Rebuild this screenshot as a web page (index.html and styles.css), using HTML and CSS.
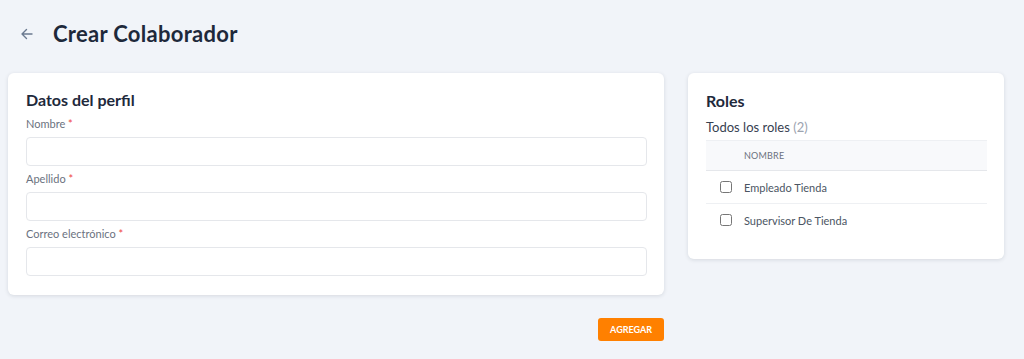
FILE: index.html
```html
<!doctype html>
<html lang="es">
<head>
  <meta charset="UTF-8">
  <meta name="viewport" content="width=device-width, initial-scale=1.0">
  <title>Crear Colaborador</title>
  <link rel="stylesheet" href="styles.css">
</head>
<body>
  <div class="page-header">
    <a href="#" class="back-link" aria-label="Volver">
      <svg width="14" height="14" viewBox="0 0 14 14" fill="none" stroke="currentColor" stroke-width="1.4" stroke-linecap="round" stroke-linejoin="round">
        <path d="M12 7H2M6.5 2.5L2 7l4.5 4.5"/>
      </svg>
    </a>
    <h1>Crear Colaborador</h1>
  </div>

  <div class="layout">
    <div class="main-col">
      <div class="card profile-card">
        <h2>Datos del perfil</h2>

        <div class="form-group">
          <label for="nombre">Nombre <span class="req">*</span></label>
          <input type="text" id="nombre" name="nombre">
        </div>

        <div class="form-group">
          <label for="apellido">Apellido <span class="req">*</span></label>
          <input type="text" id="apellido" name="apellido">
        </div>

        <div class="form-group">
          <label for="correo">Correo electrónico <span class="req">*</span></label>
          <input type="email" id="correo" name="correo">
        </div>
      </div>

      <div class="actions">
        <button type="submit" class="submit-btn">Agregar</button>
      </div>
    </div>

    <div class="card roles-card">
      <h2>Roles</h2>
      <div class="roles-count">Todos los roles <span class="muted">(2)</span></div>
      <table class="roles-table">
        <thead>
          <tr>
            <th class="check-col"></th>
            <th>Nombre</th>
          </tr>
        </thead>
        <tbody>
          <tr>
            <td class="check-col"><input type="checkbox"></td>
            <td>Empleado Tienda</td>
          </tr>
          <tr>
            <td class="check-col"><input type="checkbox"></td>
            <td>Supervisor De Tienda</td>
          </tr>
        </tbody>
      </table>
    </div>
  </div>
</body>
</html>
```

FILE: styles.css
```css
body {
  font-family: 'Lato', 'Open Sans', sans-serif;
  margin: 0;
  padding: 0;
  background: #f1f4f9;
  color: #1f2937;
}

.page-header {
  display: flex;
  align-items: center;
  height: 66px;
  padding: 0 20px;
}

.back-link {
  display: flex;
  color: #6b7a90;
  margin-right: 19px;
  margin-top: 2px;
}

h1 {
  margin: 0;
  font-size: 22px;
  font-weight: 700;
  color: #1e293b;
  letter-spacing: 0.3px;
}

.layout {
  display: flex;
  align-items: flex-start;
  gap: 24px;
  padding: 7px 20px 0 8px;
}

.main-col {
  width: 656px;
}

.card {
  background: #fff;
  border-radius: 6px;
  box-shadow: 0 1px 4px rgba(15, 23, 42, 0.12);
}

h2 {
  margin: 0;
  font-size: 16px;
  font-weight: 700;
  color: #1e293b;
}

.profile-card {
  padding: 17px 17px 19px 18px;
}

.profile-card h2 {
  margin-bottom: 8px;
}

.form-group {
  margin-bottom: 6px;
}

.form-group:last-child {
  margin-bottom: 0;
}

label {
  display: block;
  font-size: 11px;
  color: #6b7280;
  margin-bottom: 7px;
}

.req {
  color: #ef4444;
}

input[type="text"],
input[type="email"] {
  display: block;
  box-sizing: border-box;
  width: 100%;
  height: 29px;
  border: 1px solid #e5e7eb;
  border-radius: 4px;
  background: #fff;
  font-family: inherit;
}

.actions {
  display: flex;
  justify-content: flex-end;
  margin-top: 23px;
}

.submit-btn {
  background-color: #ff8000;
  color: #fff;
  border: none;
  height: 23px;
  padding: 0 12px;
  border-radius: 3px;
  font-family: inherit;
  font-size: 9px;
  font-weight: 700;
  text-transform: uppercase;
  cursor: pointer;
}

.roles-card {
  width: 316px;
  box-sizing: border-box;
  padding: 18px 17px 23px 18px;
}

.roles-count {
  font-size: 13px;
  color: #374151;
  margin: 9px 0 5px;
}

.muted {
  color: #9ca3af;
}

.roles-table {
  width: 100%;
  border-collapse: collapse;
  font-size: 11px;
  color: #4b5563;
}

.roles-table th {
  background: #f8f9fb;
  height: 29px;
  text-align: left;
  font-size: 9px;
  font-weight: 400;
  color: #6b7280;
  text-transform: uppercase;
  letter-spacing: 0.2px;
  border-top: 1px solid #eef0f3;
  border-bottom: 1px solid #e5e7eb;
  padding: 0;
}

.roles-table td {
  height: 32px;
  padding: 0;
  border-bottom: 1px solid #eef0f3;
}

.roles-table tr:last-child td {
  border-bottom: none;
}

.check-col {
  width: 38px;
}

.roles-table input[type="checkbox"] {
  width: 12px;
  height: 12px;
  margin: 0 0 0 14px;
  display: block;
  accent-color: #ff8000;
}
```
